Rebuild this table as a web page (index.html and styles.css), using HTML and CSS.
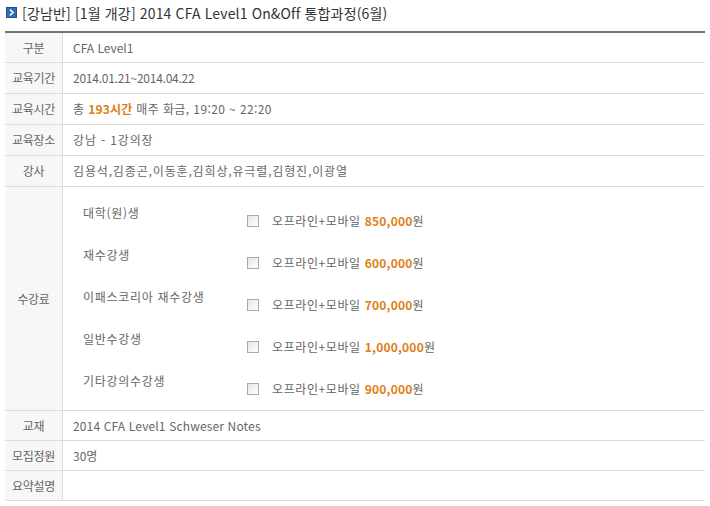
FILE: index.html
```html
<!DOCTYPE html>
<html lang="ko">
<head>
<meta charset="utf-8">
<link rel="stylesheet" href="styles.css">
</head>
<body>
<div class="wrap">
  <h2 class="title">
    <svg class="title-icon" width="11" height="11" viewBox="0 0 11 11"><rect x="0" y="0" width="11" height="11" fill="#2f6db5"/><rect x="0.5" y="0.5" width="10" height="10" fill="none" stroke="#1d4f8f"/><path d="M4 2.5 L7 5.5 L4 8.5" fill="none" stroke="#fff" stroke-width="1.6"/></svg>
    <span>[강남반] [1월 개강] 2014 CFA Level1 On&amp;Off 통합과정(6월)</span>
  </h2>
  <table class="info">
    <tr class="r-first"><th>구분</th><td>CFA Level1</td></tr>
    <tr class="r-top"><th>교육기간</th><td class="t-date">2014.01.21~2014.04.22</td></tr>
    <tr class="r-top"><th>교육시간</th><td class="t-time">총 <strong class="hl">193시간</strong> 매주 화금, 19:20 ~ 22:20</td></tr>
    <tr class="r-top"><th>교육장소</th><td class="t-ko">강남 - 1강의장</td></tr>
    <tr class="r-top"><th>강사</th><td class="t-ko">김용석,김종곤,이동훈,김희상,유극렬,김형진,이광열</td></tr>
    <tr class="r-fee"><th>수강료</th><td>
      <div class="fees">
        <div class="fee"><span class="fee-name">대학(원)생</span><label class="fee-opt"><span class="cb"></span><span class="opt-txt">오프라인+모바일</span><strong class="hl">850,000</strong>원</label></div>
        <div class="fee"><span class="fee-name">재수강생</span><label class="fee-opt"><span class="cb"></span><span class="opt-txt">오프라인+모바일</span><strong class="hl">600,000</strong>원</label></div>
        <div class="fee"><span class="fee-name">이패스코리아 재수강생</span><label class="fee-opt"><span class="cb"></span><span class="opt-txt">오프라인+모바일</span><strong class="hl">700,000</strong>원</label></div>
        <div class="fee"><span class="fee-name">일반수강생</span><label class="fee-opt"><span class="cb"></span><span class="opt-txt">오프라인+모바일</span><strong class="hl">1,000,000</strong>원</label></div>
        <div class="fee"><span class="fee-name">기타강의수강생</span><label class="fee-opt"><span class="cb"></span><span class="opt-txt">오프라인+모바일</span><strong class="hl">900,000</strong>원</label></div>
      </div>
    </td></tr>
    <tr class="r-bot"><th>교재</th><td class="t-book">2014 CFA Level1 Schweser Notes</td></tr>
    <tr class="r-bot"><th>모집정원</th><td>30명</td></tr>
    <tr class="r-bot"><th>요약설명</th><td></td></tr>
  </table>
</div>
</body>
</html>
```
FILE: styles.css
```css
html, body {
  margin: 0;
  padding: 0;
  background: #fff;
}
body {
  font-family: "Noto Sans CJK KR", "Liberation Sans", sans-serif;
  font-size: 12px;
  color: #666;
}
.wrap {
  padding: 0 5px;
  width: 700px;
}
.title {
  margin: 0;
  height: 31px;
  display: flex;
  align-items: center;
  padding-left: 1px;
  padding-bottom: 6px;
  box-sizing: border-box;
  font-size: 14px;
  font-weight: normal;
  color: #333;
  letter-spacing: 0.15px;
}
.title-icon {
  margin-right: 5px;
  flex: none;
}
.info {
  width: 700px;
  border-collapse: collapse;
  border-top: 2px solid #737373;
}
.info th, .info td {
  border-bottom: 1px solid #dcdcdc;
  padding: 0;
  line-height: 16px;
}
.info th {
  width: 57px;
  background: #f7f7f7;
  border-right: 1px solid #dcdcdc;
  font-weight: normal;
  text-align: center;
  color: #666;
  letter-spacing: -0.3px;
}
.info td {
  padding-left: 10px;
  text-align: left;
}
.r-first th, .r-first td { height: 29px; }
.r-top th, .r-top td { height: 30px; }
.r-bot th, .r-bot td { height: 29px; }
.t-date { letter-spacing: -0.25px; }
.t-time { letter-spacing: 0.4px; }
.t-ko { letter-spacing: 0.85px; }
.t-book { letter-spacing: 0.15px; }
.hl {
  color: #dd7e16;
  font-weight: bold;
  letter-spacing: 0.2px;
}
.fees {
  padding: 18px 0 13px 10px;
}
.fee {
  display: flex;
  height: 42px;
}
.fee:last-child {
  height: 24px;
}
.fee-name {
  width: 164px;
  flex: none;
  letter-spacing: 0.7px;
}
.fee-opt {
  display: flex;
  align-items: center;
  padding-top: 8px;
  height: 16px;
}
.opt-txt {
  letter-spacing: 0.6px;
  margin-right: 4px;
}
.cb {
  width: 10px;
  height: 10px;
  border: 1px solid #a9a9a9;
  background: linear-gradient(135deg, #e6e6e6, #fff);
  margin-right: 13px;
  display: inline-block;
}
```
